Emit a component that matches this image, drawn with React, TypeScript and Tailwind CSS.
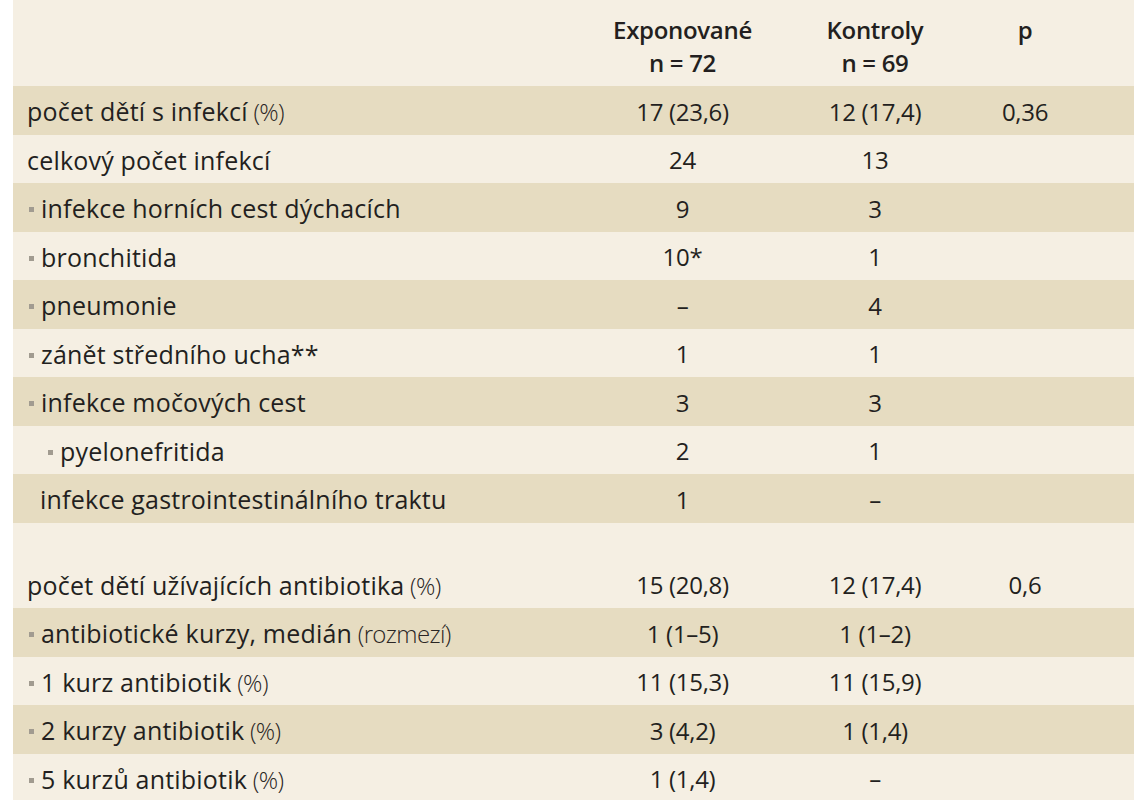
import React from 'react';

type Row = {
  label: string;
  suffix?: string;
  level?: 0 | 1 | 2;
  plainIndent?: boolean;
  exp?: string;
  ctrl?: string;
  p?: string;
  shade: boolean;
  blank?: boolean;
};

const rows: Row[] = [
  { label: 'počet dětí s infekcí', suffix: '(%)', exp: '17 (23,6)', ctrl: '12 (17,4)', p: '0,36', shade: true },
  { label: 'celkový počet infekcí', exp: '24', ctrl: '13', shade: false },
  { label: 'infekce horních cest dýchacích', level: 1, exp: '9', ctrl: '3', shade: true },
  { label: 'bronchitida', level: 1, exp: '10*', ctrl: '1', shade: false },
  { label: 'pneumonie', level: 1, exp: '–', ctrl: '4', shade: true },
  { label: 'zánět středního ucha**', level: 1, exp: '1', ctrl: '1', shade: false },
  { label: 'infekce močových cest', level: 1, exp: '3', ctrl: '3', shade: true },
  { label: 'pyelonefritida', level: 2, exp: '2', ctrl: '1', shade: false },
  { label: 'infekce gastrointestinálního traktu', plainIndent: true, exp: '1', ctrl: '–', shade: true },
  { label: '', blank: true, shade: false },
  { label: 'počet dětí užívajících antibiotika', suffix: '(%)', exp: '15 (20,8)', ctrl: '12 (17,4)', p: '0,6', shade: false },
  { label: 'antibiotické kurzy, medián', suffix: '(rozmezí)', level: 1, exp: '1 (1–5)', ctrl: '1 (1–2)', shade: true },
  { label: '1 kurz antibiotik', suffix: '(%)', level: 1, exp: '11 (15,3)', ctrl: '11 (15,9)', shade: false },
  { label: '2 kurzy antibiotik', suffix: '(%)', level: 1, exp: '3 (4,2)', ctrl: '1 (1,4)', shade: true },
  { label: '5 kurzů antibiotik', suffix: '(%)', level: 1, exp: '1 (1,4)', ctrl: '–', shade: false },
];

function Bullet() {
  return <span className="inline-block w-[5px] h-[5px] bg-[#a19b90] mr-[7px] mb-[6px]" />;
}

function Label({ row }: { row: Row }) {
  let pad = 'pl-[14px]';
  if (row.level === 1) pad = 'pl-[16px]';
  if (row.level === 2) pad = 'pl-[35px]';
  if (row.plainIndent) pad = 'pl-[27px]';
  return (
    <div className={`flex items-center text-[25px] tracking-[0.2px] ${pad}`}>
      <span>
        {row.level ? <Bullet /> : null}
        {row.label}
        {row.suffix ? <span className="font-light text-[#2a2624] text-[24px] tracking-[-0.6px]"> {row.suffix}</span> : null}
      </span>
    </div>
  );
}

export default function App() {
  return (
    <div className="w-[1145px] h-[800px] bg-white overflow-hidden pl-[13px] pr-[11px] text-[#231f20] font-['Open_Sans',sans-serif] text-[24px] tracking-[-0.3px]">
      <div className="bg-[#f5efe3] h-full">
        <div className="grid grid-cols-[572px_195px_190px_110px_1fr] h-[86px] items-start pt-[13px] font-semibold leading-[33px]">
          <div />
          <div className="text-center">
            <div>Exponované</div>
            <div>n = 72</div>
          </div>
          <div className="text-center">
            <div>Kontroly</div>
            <div>n = 69</div>
          </div>
          <div className="text-center">p</div>
          <div />
        </div>
        {rows.map((row, i) =>
          row.blank ? (
            <div key={i} className="h-[37px]" />
          ) : (
            <div
              key={i}
              className={`grid grid-cols-[572px_195px_190px_110px_1fr] h-[48.5px] items-center pt-[3px] ${row.shade ? 'bg-[#e6dcc1]' : ''}`}
            >
              <Label row={row} />
              <div className="text-center">{row.exp}</div>
              <div className="text-center">{row.ctrl}</div>
              <div className="text-center">{row.p}</div>
              <div />
            </div>
          )
        )}
      </div>
    </div>
  );
}
